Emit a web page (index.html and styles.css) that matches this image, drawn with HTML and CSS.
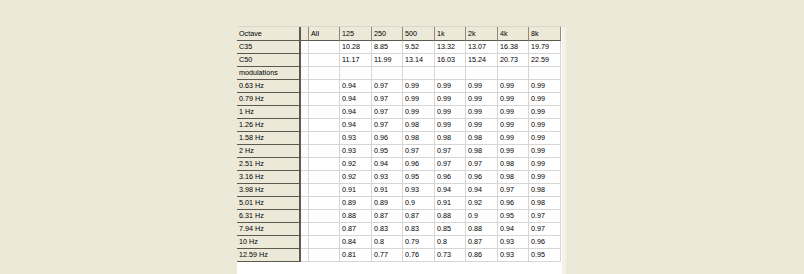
FILE: index.html
```html
<!DOCTYPE html>
<html>
<head>
<meta charset="utf-8">
<link rel="stylesheet" href="styles.css">
</head>
<body>
<div class="grid-box">
<table class="grid">
<colgroup>
<col class="c-head"><col class="c-gap"><col class="c-all">
<col class="c-a"><col class="c-b"><col class="c-a"><col class="c-b"><col class="c-a"><col class="c-b"><col class="c-a">
</colgroup>
<thead>
<tr><th class="rh">Octave</th><th></th><th>All</th><th>125</th><th>250</th><th>500</th><th>1k</th><th>2k</th><th>4k</th><th>8k</th></tr>
</thead>
<tbody>
<tr><th class="rh">C35</th><td></td><td></td><td>10.28</td><td>8.85</td><td>9.52</td><td>13.32</td><td>13.07</td><td>16.38</td><td>19.79</td></tr>
<tr><th class="rh">C50</th><td></td><td></td><td>11.17</td><td>11.99</td><td>13.14</td><td>16.03</td><td>15.24</td><td>20.73</td><td>22.59</td></tr>
<tr><th class="rh">modulations</th><td></td><td></td><td></td><td></td><td></td><td></td><td></td><td></td><td></td></tr>
<tr><th class="rh">0.63 Hz</th><td></td><td></td><td>0.94</td><td>0.97</td><td>0.99</td><td>0.99</td><td>0.99</td><td>0.99</td><td>0.99</td></tr>
<tr><th class="rh">0.79 Hz</th><td></td><td></td><td>0.94</td><td>0.97</td><td>0.99</td><td>0.99</td><td>0.99</td><td>0.99</td><td>0.99</td></tr>
<tr><th class="rh">1 Hz</th><td></td><td></td><td>0.94</td><td>0.97</td><td>0.99</td><td>0.99</td><td>0.99</td><td>0.99</td><td>0.99</td></tr>
<tr><th class="rh">1.26 Hz</th><td></td><td></td><td>0.94</td><td>0.97</td><td>0.98</td><td>0.99</td><td>0.99</td><td>0.99</td><td>0.99</td></tr>
<tr><th class="rh">1.58 Hz</th><td></td><td></td><td>0.93</td><td>0.96</td><td>0.98</td><td>0.98</td><td>0.98</td><td>0.99</td><td>0.99</td></tr>
<tr><th class="rh">2 Hz</th><td></td><td></td><td>0.93</td><td>0.95</td><td>0.97</td><td>0.97</td><td>0.98</td><td>0.99</td><td>0.99</td></tr>
<tr><th class="rh">2.51 Hz</th><td></td><td></td><td>0.92</td><td>0.94</td><td>0.96</td><td>0.97</td><td>0.97</td><td>0.98</td><td>0.99</td></tr>
<tr><th class="rh">3.16 Hz</th><td></td><td></td><td>0.92</td><td>0.93</td><td>0.95</td><td>0.96</td><td>0.96</td><td>0.98</td><td>0.99</td></tr>
<tr><th class="rh">3.98 Hz</th><td></td><td></td><td>0.91</td><td>0.91</td><td>0.93</td><td>0.94</td><td>0.94</td><td>0.97</td><td>0.98</td></tr>
<tr><th class="rh">5.01 Hz</th><td></td><td></td><td>0.89</td><td>0.89</td><td>0.9</td><td>0.91</td><td>0.92</td><td>0.96</td><td>0.98</td></tr>
<tr><th class="rh">6.31 Hz</th><td></td><td></td><td>0.88</td><td>0.87</td><td>0.87</td><td>0.88</td><td>0.9</td><td>0.95</td><td>0.97</td></tr>
<tr><th class="rh">7.94 Hz</th><td></td><td></td><td>0.87</td><td>0.83</td><td>0.83</td><td>0.85</td><td>0.88</td><td>0.94</td><td>0.97</td></tr>
<tr><th class="rh">10 Hz</th><td></td><td></td><td>0.84</td><td>0.8</td><td>0.79</td><td>0.8</td><td>0.87</td><td>0.93</td><td>0.96</td></tr>
<tr><th class="rh">12.59 Hz</th><td></td><td></td><td>0.81</td><td>0.77</td><td>0.76</td><td>0.73</td><td>0.86</td><td>0.93</td><td>0.95</td></tr>
</tbody>
</table>
</div>
</body>
</html>
```
FILE: styles.css
```css
html, body {
  margin: 0;
  padding: 0;
  background: #ECE9D8;
  overflow: hidden;
}
body {
  height: 274px;
  padding-top: 26px;
  padding-left: 237px;
  box-sizing: border-box;
}
.grid-box {
  width: 325px;
  height: 260px;
  background: #ffffff;
  border-right: 4px solid #F4F2E8;
  border-top: 1px solid #D9D6C6;
}
.grid {
  border-collapse: separate;
  border-spacing: 0;
  table-layout: fixed;
  width: 324px;
  font-family: "Liberation Sans", Arial, sans-serif;
  font-size: 7.2px;
  color: #000;
}
.c-head { width: 64px; }
.c-gap { width: 8px; }
.c-all { width: 31px; }
.c-a { width: 32px; }
.c-b { width: 31px; }
.grid th, .grid td {
  height: 12px;
  padding: 0 0 0 2px;
  text-align: left;
  font-weight: normal;
  white-space: nowrap;
  overflow: hidden;
  vertical-align: middle;
  line-height: 12px;
  box-sizing: border-box;
}
.grid thead th {
  height: 14px;
  background: #ECE9D8;
  border-right: 1px solid #8E8B7C;
  border-bottom: 1px solid #5C5A50;
}
.grid th.rh {
  background: #ECE9D8;
  border-right: 2px solid #5C5A50;
  border-bottom: 1px solid #5C5A50;
  padding-left: 2px;
}
.grid td {
  background: #ffffff;
  border-right: 1px solid #D6D6D6;
  border-bottom: 1px solid #D6D6D6;
}
```
